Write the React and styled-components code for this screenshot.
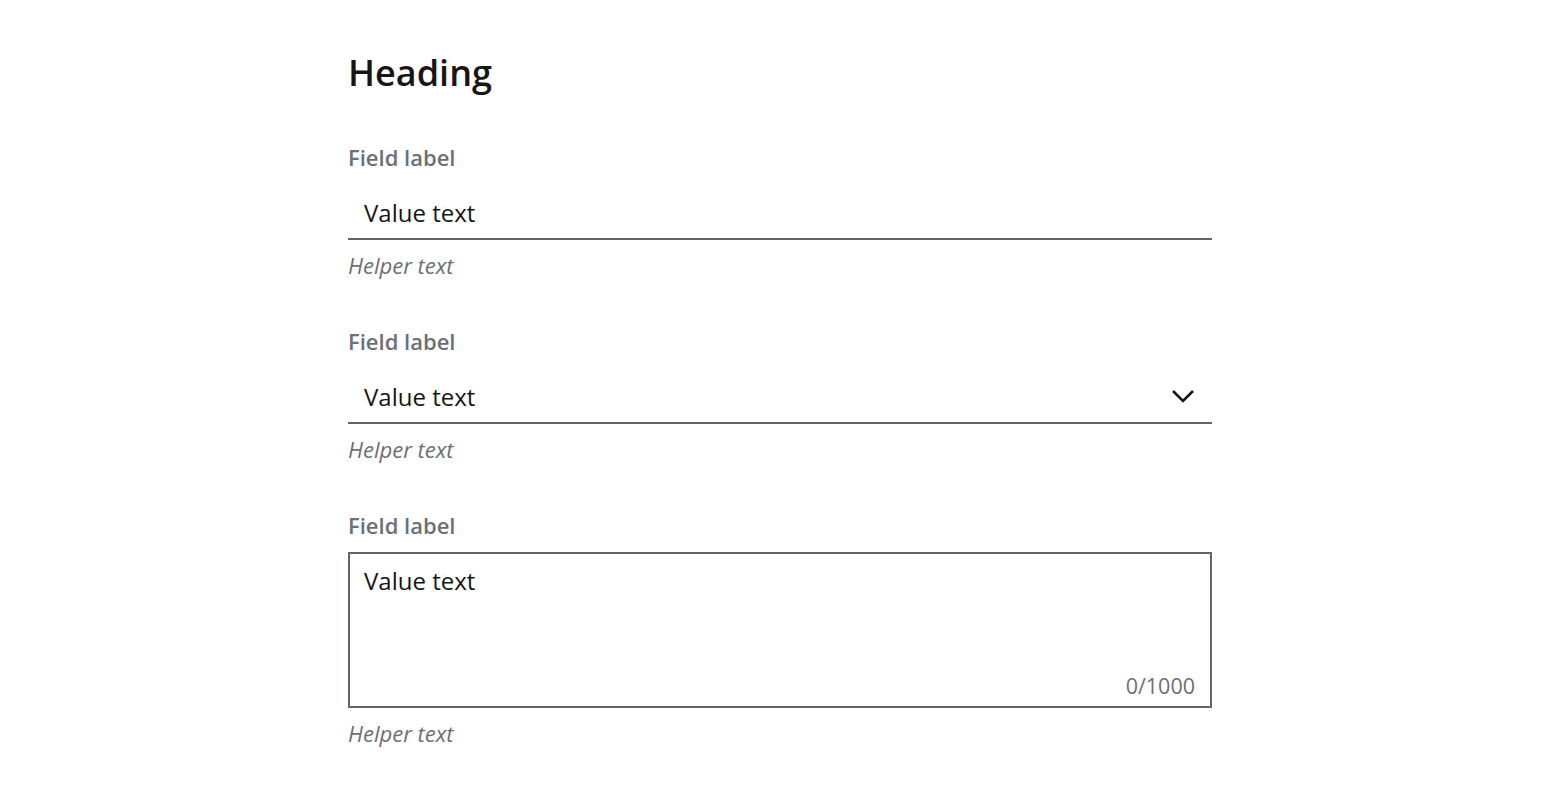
import styled, { createGlobalStyle } from "styled-components";

const GlobalStyle = createGlobalStyle`
  body {
    margin: 0;
    background: #ffffff;
    font-family: "Open Sans", "Noto Sans", sans-serif;
    color: #161616;
  }
`;

const Page = styled.main`
  max-width: 864px;
  margin: 0 auto;
  padding-top: 51px;
`;

const Heading = styled.h1`
  margin: 0 0 49px;
  font-size: 36px;
  line-height: 44px;
  font-weight: 600;
  color: #161616;
`;

const Field = styled.div`
  display: flex;
  flex-direction: column;
  margin-bottom: 50px;
`;

const Label = styled.label`
  font-size: 22px;
  line-height: 26px;
  font-weight: 600;
  color: #6b6f78;
  margin-bottom: ${(p) => (p.$boxed ? "14px" : "18px")};
`;

const Input = styled.div`
  display: flex;
  align-items: center;
  justify-content: space-between;
  height: 48px;
  padding: 0 17px 2px 16px;
  border-bottom: 2px solid #60646d;
  font-size: 24px;
  color: #161616;
`;

const TextArea = styled.div`
  position: relative;
  height: 124px;
  padding: 13px 14px 15px;
  border: 2px solid #60646d;
  font-size: 24px;
  line-height: 28px;
  color: #161616;
`;

const Counter = styled.span`
  position: absolute;
  right: 15px;
  bottom: 6px;
  font-size: 21.5px;
  line-height: 28px;
  color: #6b6f78;
`;

const Helper = styled.div`
  margin-top: 12px;
  font-size: 22px;
  line-height: 26px;
  font-style: italic;
  color: #6b6f78;
`;

const Chevron = () => (
  <svg width="24" height="14" viewBox="0 0 24 14" fill="none">
    <path d="M2 2 L12 12 L22 2" stroke="#161616" strokeWidth="2.6" />
  </svg>
);

export default function App() {
  return (
    <>
      <GlobalStyle />
      <Page>
        <Heading>Heading</Heading>
        <Field>
          <Label>Field label</Label>
          <Input>Value text</Input>
          <Helper>Helper text</Helper>
        </Field>
        <Field>
          <Label>Field label</Label>
          <Input>
            Value text
            <Chevron />
          </Input>
          <Helper>Helper text</Helper>
        </Field>
        <Field>
          <Label $boxed>Field label</Label>
          <TextArea>
            Value text
            <Counter>0/1000</Counter>
          </TextArea>
          <Helper>Helper text</Helper>
        </Field>
      </Page>
    </>
  );
}
